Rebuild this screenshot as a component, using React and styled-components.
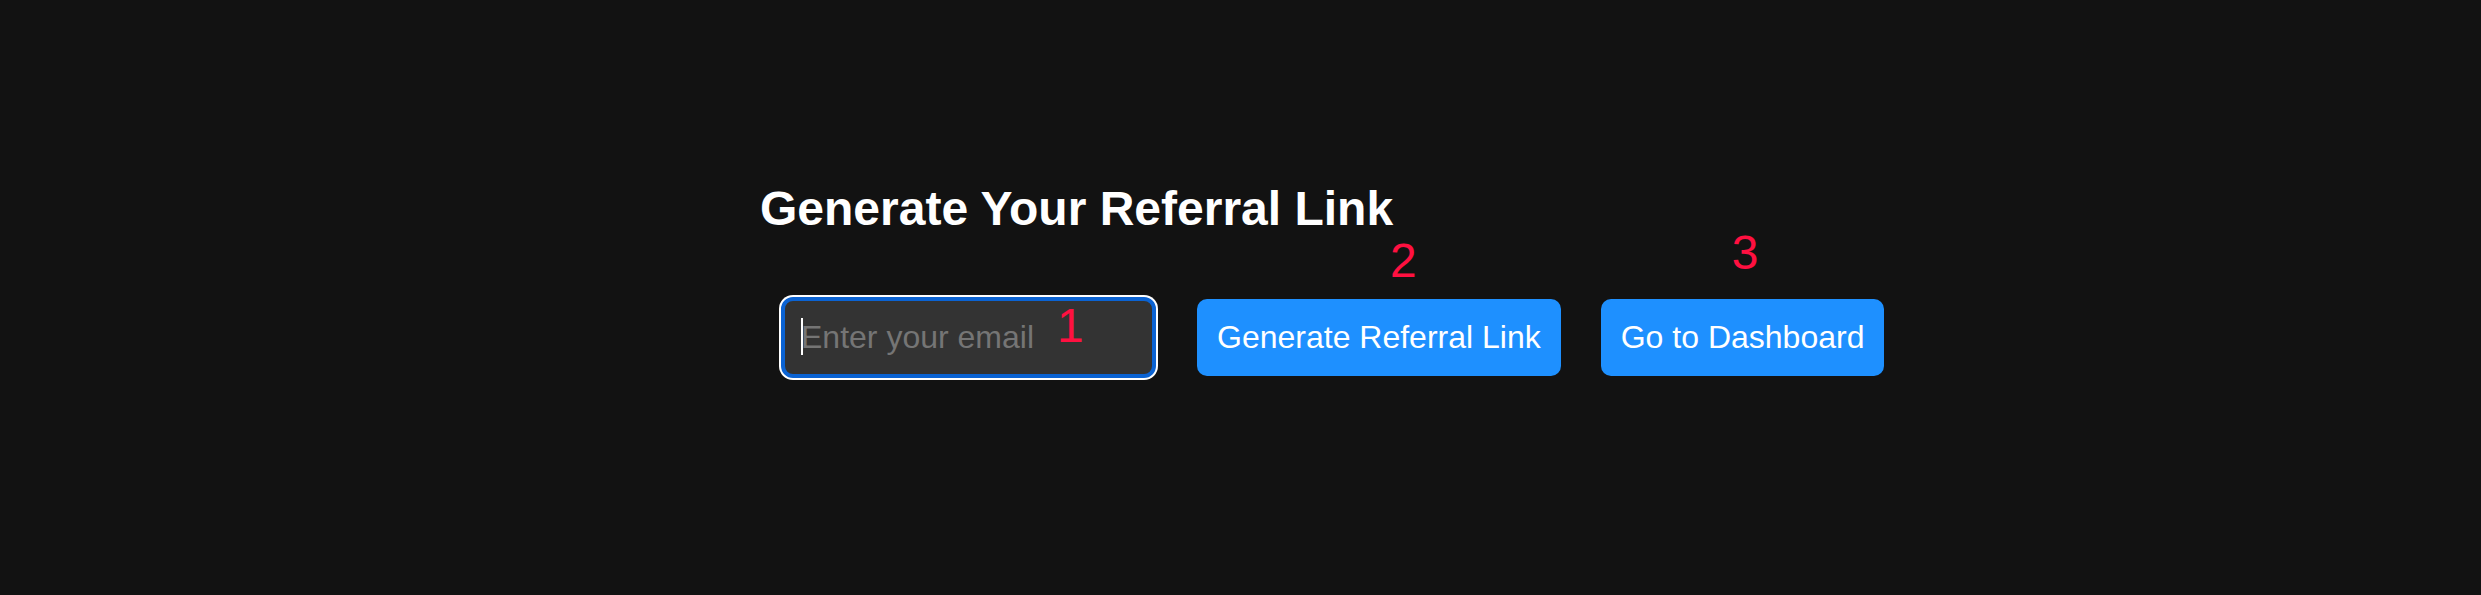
import React from "react";
import styled, { createGlobalStyle } from "styled-components";

const GlobalStyle = createGlobalStyle`
  html, body {
    margin: 0;
    padding: 0;
    background: #121212;
  }
  body {
    font-family: "Liberation Sans", Arial, Helvetica, sans-serif;
    color: #ffffff;
    min-height: 595px;
  }
`;

const Page = styled.main`
  padding: 181px 0 0 760px;
  min-height: 595px;
  box-sizing: border-box;
`;

const Title = styled.h2`
  margin: 0;
  font-size: 48px;
  line-height: 56px;
  font-weight: 700;
  color: #ffffff;
`;

const Row = styled.div`
  display: flex;
  align-items: center;
  gap: 40px;
  margin-top: 60px;
  padding-left: 21px;
  height: 81px;
`;

const Field = styled.div`
  position: relative;
  display: flex;
  margin-right: 1px;
`;

const EmailInput = styled.input`
  box-sizing: border-box;
  width: 375px;
  height: 81px;
  padding: 0 16px;
  border: 4px solid #0b63d3;
  border-radius: 12px;
  box-shadow: 0 0 0 2px #ffffff;
  background: #333333;
  color: #ffffff;
  font-family: "Liberation Sans", Arial, sans-serif;
  font-size: 32px;
  outline: none;
  caret-color: transparent;

  &::placeholder {
    color: #757575;
  }
`;

const Caret = styled.span`
  position: absolute;
  left: 20px;
  top: 21px;
  width: 2px;
  height: 37px;
  background: #ffffff;
`;

const ActionButton = styled.button`
  position: relative;
  box-sizing: border-box;
  height: 77px;
  padding: 0 20px;
  border: none;
  border-radius: 10px;
  background: #1e90ff;
  color: #ffffff;
  font-family: "Liberation Sans", Arial, sans-serif;
  font-size: 32px;
  line-height: 37px;
  white-space: nowrap;
  cursor: pointer;
`;

/* Red annotation numbers that sit over/near the element they label */
const Marker = styled.span`
  position: absolute;
  left: ${(p) => p.$dx}px;
  top: ${(p) => p.$dy}px;
  font-family: "Liberation Sans", Arial, sans-serif;
  font-size: 48px;
  line-height: 1;
  color: #ff1040;
  pointer-events: none;
`;

export default function App() {
  return (
    <>
      <GlobalStyle />
      <Page>
        <Title>Generate Your Referral Link</Title>
        <Row>
          <Field>
            <EmailInput type="email" placeholder="Enter your email" />
            <Caret />
            <Marker $dx={276} $dy={5}>1</Marker>
          </Field>
          <ActionButton>
            Generate Referral Link
            <Marker $dx={193} $dy={-62}>2</Marker>
          </ActionButton>
          <ActionButton>
            Go to Dashboard
            <Marker $dx={131} $dy={-70}>3</Marker>
          </ActionButton>
        </Row>
      </Page>
    </>
  );
}
